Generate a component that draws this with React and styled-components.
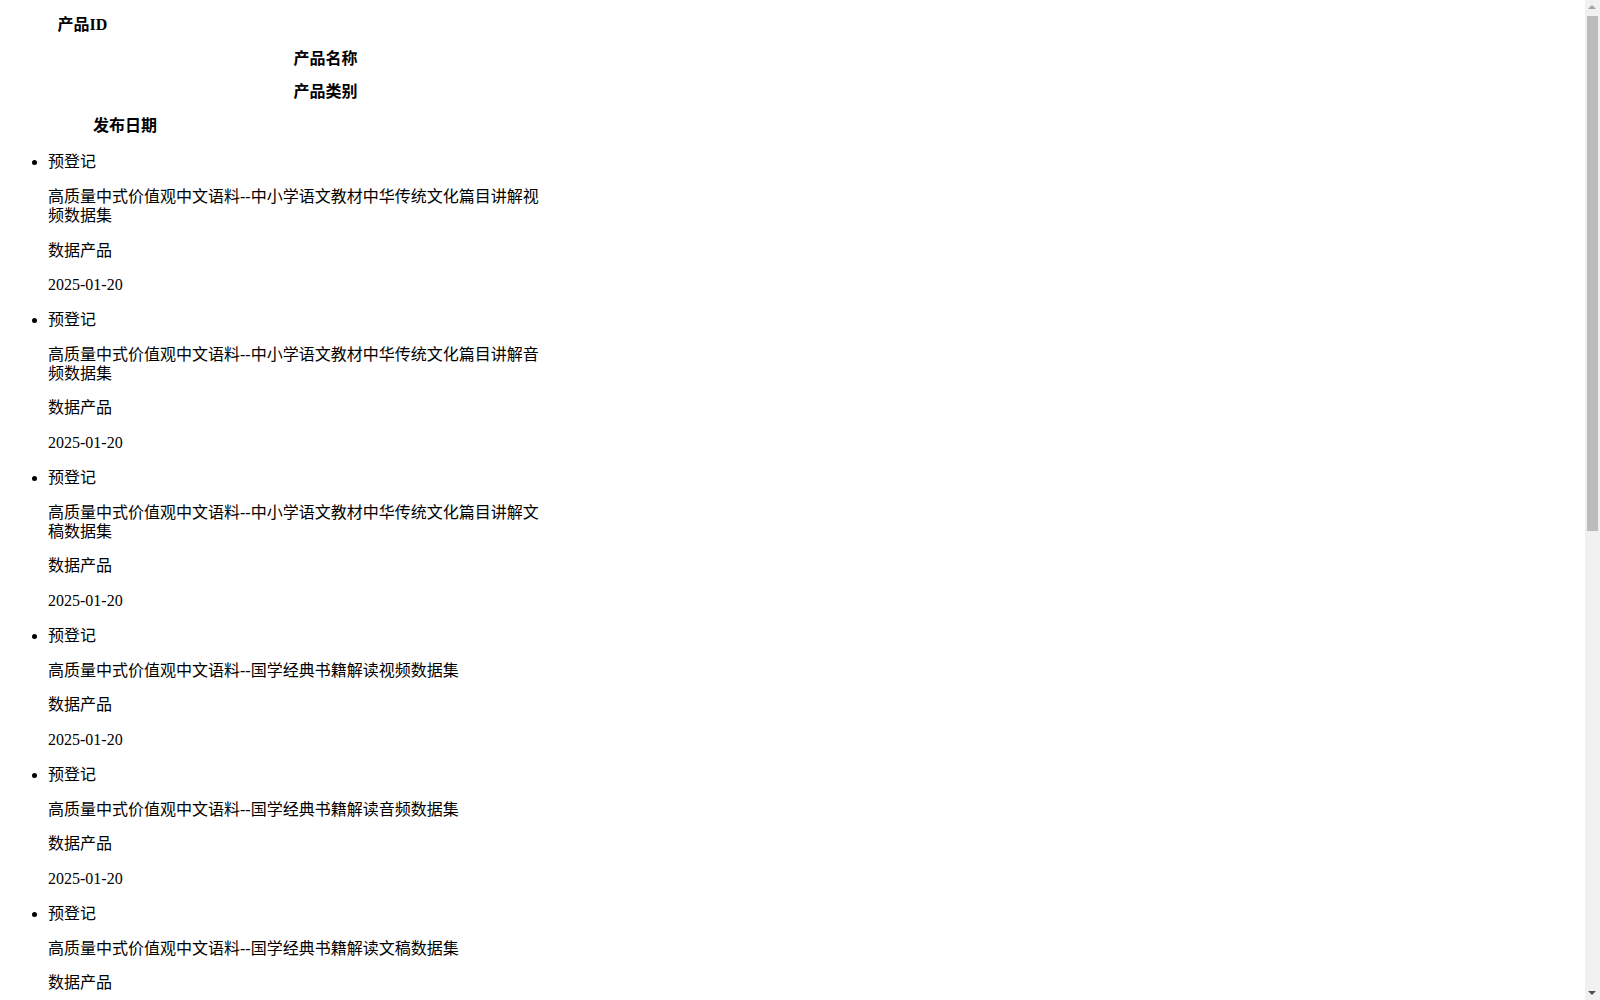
import React from "react";
import styled, { createGlobalStyle } from "styled-components";

const GlobalStyle = createGlobalStyle`
  html {
    overflow: hidden;
  }
  body {
    margin: 0 8px 8px;
    background: #fff;
    color: #000;
    font-family: "Liberation Serif", "Noto Sans CJK SC", serif;
    font-size: 16px;
  }
`;

const Header = styled.div`
  display: block;
`;

const HeaderCell = styled.p`
  width: ${(p) => p.width};
  margin: 16px 0;
  font-weight: bold;
  text-align: center;
  line-height: 17.7px;
`;

const List = styled.ul`
  margin: 18.5px 0 16px;
  padding-left: 40px;
  list-style: disc;
`;

const Item = styled.li`
  width: 500px;
`;

const Field = styled.p`
  margin: 16px 0;
  line-height: 18.77px;
`;

const ScrollTrack = styled.div`
  position: fixed;
  top: 0;
  right: 0;
  width: 15px;
  height: 100vh;
  background: #f1f1f1;
`;

const ScrollThumb = styled.div`
  position: absolute;
  top: 16px;
  left: 2px;
  width: 11px;
  height: 515px;
  background: #bcbcbc;
`;

const Arrow = styled.div`
  position: absolute;
  left: 3px;
  width: 0;
  height: 0;
  border-left: 4.5px solid transparent;
  border-right: 4.5px solid transparent;
  ${(p) =>
    p.down
      ? `bottom: 5px; border-top: 4px solid #505050;`
      : `top: 5px; border-bottom: 4px solid #a3a3a3;`}
`;

const prefix = "高质量中式价值观中文语料--";

const titles = [
  "中小学语文教材中华传统文化篇目讲解视频数据集",
  "中小学语文教材中华传统文化篇目讲解音频数据集",
  "中小学语文教材中华传统文化篇目讲解文稿数据集",
  "国学经典书籍解读视频数据集",
  "国学经典书籍解读音频数据集",
  "国学经典书籍解读文稿数据集",
  "传统节日文化讲解视频数据集",
  "传统节日文化讲解音频数据集",
  "传统节日文化讲解文稿数据集",
  "中华诗词赏析视频数据集",
  "中华诗词赏析音频数据集",
  "中华诗词赏析文稿数据集",
  "历史人物故事视频数据集",
  "历史人物故事音频数据集",
  "历史人物故事文稿数据集",
];

const products = titles.map((t, i) => ({
  id: i + 1,
  status: "预登记",
  name: prefix + t,
  category: "数据产品",
  date: "2025-01-20",
}));

export default function App() {
  return (
    <>
      <GlobalStyle />
      <Header>
        <HeaderCell width="149px">产品ID</HeaderCell>
        <HeaderCell width="635px">产品名称</HeaderCell>
        <HeaderCell width="635px">产品类别</HeaderCell>
        <HeaderCell width="234px">发布日期</HeaderCell>
      </Header>
      <List>
        {products.map((p) => (
          <Item key={p.id}>
            <Field>{p.status}</Field>
            <Field>{p.name}</Field>
            <Field>{p.category}</Field>
            <Field>{p.date}</Field>
          </Item>
        ))}
      </List>
      <ScrollTrack>
        <Arrow />
        <ScrollThumb />
        <Arrow down />
      </ScrollTrack>
    </>
  );
}
